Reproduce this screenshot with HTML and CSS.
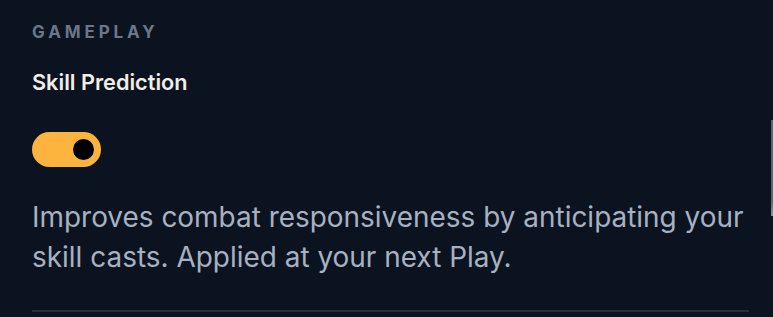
FILE: index.html
```html
<!DOCTYPE html>
<html>
<head>
<meta charset="utf-8">
<link rel="stylesheet" href="styles.css">
</head>
<body>
<div class="panel">
  <section class="section">
    <h2 class="section-title">GAMEPLAY</h2>
    <div class="setting">
      <div class="setting-label">Skill Prediction</div>
      <div class="toggle on"><span class="knob"></span></div>
      <p class="setting-desc">Improves combat responsiveness by anticipating your skill casts. Applied at your next Play.</p>
    </div>
  </section>
  <div class="scroll-thumb"></div>
</div>
</body>
</html>
```
FILE: styles.css
```css
html, body {
  margin: 0;
  padding: 0;
  background: #0b1320;
  height: 100%;
  overflow: hidden;
}
.panel {
  position: relative;
  height: 317px;
  font-family: Inter, "Noto Sans", sans-serif;
}
.section {
  margin: 0 24px 0 32px;
  padding-top: 21px;
  height: 289px;
  border-bottom: 2px solid #262f3b;
}
.section-title {
  margin: 0;
  font-size: 17px;
  font-weight: 700;
  letter-spacing: 3.9px;
  color: #6b7788;
  line-height: 22px;
}
.setting-label {
  margin-top: 26px;
  font-size: 21.7px;
  font-weight: 600;
  color: #f1ede6;
  line-height: 26px;
}
.toggle {
  margin-top: 37px;
  width: 69px;
  height: 35px;
  border-radius: 18px;
  background: #fdb43f;
  display: flex;
  align-items: center;
  justify-content: flex-end;
  padding-right: 7px;
  box-sizing: border-box;
}
.knob {
  width: 21px;
  height: 21px;
  border-radius: 50%;
  background: #000;
}
.setting-desc {
  margin: 30px 0 0;
  font-size: 27.95px;
  line-height: 40px;
  color: #a6b1c1;
  max-width: 717px;
}
.scroll-thumb {
  position: absolute;
  right: 0;
  top: 120px;
  width: 2px;
  height: 96px;
  background: linear-gradient(#5d6671, #5d6671 85%, #8d949d);
}
```
